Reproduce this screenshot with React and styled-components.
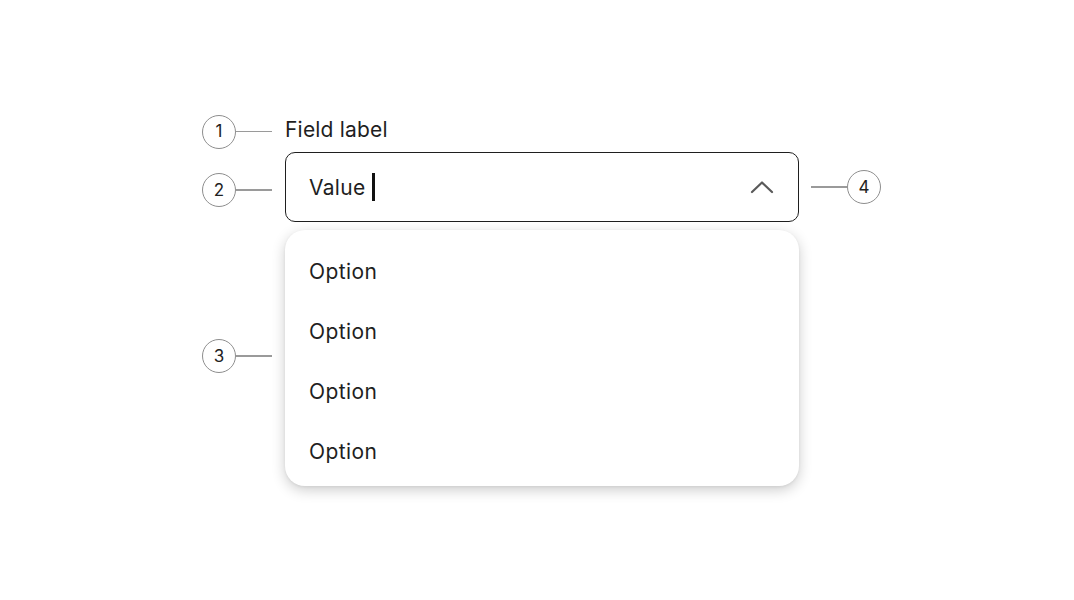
import React from "react";
import styled, { createGlobalStyle } from "styled-components";

const Global = createGlobalStyle`
  html, body { margin: 0; padding: 0; background: #ffffff; }
  body { font-family: "Inter", "Open Sans", "Liberation Sans", sans-serif; color: #1f1f1f; }
`;

const Page = styled.div`
  width: 1074px;
  height: 600px;
  padding-top: 113px;
  padding-left: 202px;
  box-sizing: border-box;
`;

const Layout = styled.div`
  display: grid;
  grid-template-columns: 83px 514px auto;
  grid-template-rows: auto 70px auto;
`;

const Callout = styled.div`
  display: flex;
  align-items: center;
  align-self: center;
  margin-top: ${(p) => p.$offset || 0}px;
  flex-direction: ${(p) => (p.$reverse ? "row-reverse" : "row")};
  justify-self: start;
  margin-left: ${(p) => p.$ml || 0}px;
`;

const Circle = styled.div`
  width: 32px;
  height: 32px;
  border: 1.3px solid #8e8e8e;
  border-radius: 50%;
  display: flex;
  align-items: center;
  justify-content: center;
  font-size: 17px;
  color: #222;
  box-sizing: content-box;
  line-height: 1;
`;

const Line = styled.div`
  width: 36px;
  height: 1.3px;
  background: #9a9a9a;
`;

const Label = styled.div`
  font-size: 21px;
  letter-spacing: 0.2px;
  line-height: 24px;
  padding: 5px 0 10px;
  color: #1f1f1f;
`;

const Field = styled.div`
  border: 1.3px solid #1f1f1f;
  border-radius: 10px;
  display: flex;
  align-items: center;
  justify-content: space-between;
  padding: 0 24px 0 23px;
  box-sizing: border-box;
  height: 70px;
`;

const ValueText = styled.div`
  display: flex;
  align-items: center;
  font-size: 21px;
  letter-spacing: 0.3px;
  gap: 7px;
`;

const Cursor = styled.span`
  display: inline-block;
  width: 3px;
  height: 28px;
  background: #111;
`;

const Menu = styled.div`
  margin-top: 8px;
  height: 256px;
  box-sizing: border-box;
  border-radius: 20px;
  background: #fff;
  box-shadow: 0 4px 14px rgba(0, 0, 0, 0.2), 0 1px 3px rgba(0, 0, 0, 0.06);
  padding: 11px 0 5px;
`;

const Option = styled.div`
  height: 60px;
  display: flex;
  align-items: center;
  padding-left: 24px;
  font-size: 21px;
  letter-spacing: 0.4px;
  color: #1f1f1f;
`;

const Chevron = () => (
  <svg width="24" height="14" viewBox="0 0 24 14" fill="none">
    <path d="M2 12 L12 2.5 L22 12" stroke="#5a5a5a" strokeWidth="2.2" strokeLinecap="round" strokeLinejoin="round" />
  </svg>
);

export default function App() {
  return (
    <>
      <Global />
      <Page>
        <Layout>
          <Callout $offset={-2}>
            <Circle>1</Circle>
            <Line />
          </Callout>
          <Label>Field label</Label>
          <div />

          <Callout $offset={6}>
            <Circle>2</Circle>
            <Line />
          </Callout>
          <Field>
            <ValueText>
              Value
              <Cursor />
            </ValueText>
            <Chevron />
          </Field>
          <Callout $reverse $ml={12}>
            <Circle>4</Circle>
            <Line />
          </Callout>

          <Callout $offset={4}>
            <Circle>3</Circle>
            <Line />
          </Callout>
          <Menu>
            <Option>Option</Option>
            <Option>Option</Option>
            <Option>Option</Option>
            <Option>Option</Option>
          </Menu>
          <div />
        </Layout>
      </Page>
    </>
  );
}
